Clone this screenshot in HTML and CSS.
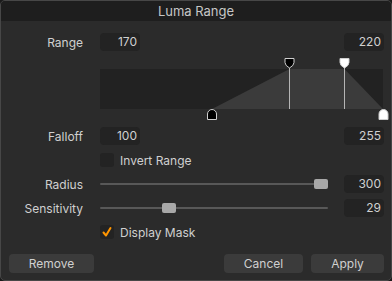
FILE: index.html
```html
<!DOCTYPE html>
<html lang="en">
<head>
    <meta charset="UTF-8">
    <title>Luma Range</title>
    <link rel="stylesheet" href="styles.css">
</head>
<body>

<div class="window">
    <div class="titlebar">Luma Range</div>

    <div class="content">
        <div class="row">
            <span class="label">Range</span>
            <span class="field">170</span>
            <span class="spacer"></span>
            <span class="field">220</span>
        </div>

        <div class="graph">
            <svg width="292" height="76" viewBox="0 0 292 76">
                <rect x="0" y="18" width="283" height="40" fill="#222222"/>
                <polygon points="112,58 189.5,18 244.5,18 283,58" fill="#3b3b3b"/>
                <line x1="189.5" y1="16" x2="189.5" y2="58" stroke="#b5b5b5" stroke-width="1"/>
                <line x1="244.5" y1="16" x2="244.5" y2="58" stroke="#b5b5b5" stroke-width="1"/>
                <!-- top handles -->
                <path d="M185,7.5 h9 v4 q0,3 -4.5,5.5 q-4.5,-2.5 -4.5,-5.5 z" fill="#000" stroke="#cfcfcf" stroke-width="1"/>
                <path d="M240,7.5 h9 v4 q0,3 -4.5,5.5 q-4.5,-2.5 -4.5,-5.5 z" fill="#fff" stroke="#cfcfcf" stroke-width="1"/>
                <!-- bottom handles -->
                <path d="M107.5,68.5 v-5.5 a4.5,4.5 0 0 1 9,0 v5.5 z" fill="#000" stroke="#cfcfcf" stroke-width="1"/>
                <path d="M279,68.5 v-5.5 a4.5,4.5 0 0 1 9,0 v5.5 z" fill="#fff" stroke="#cfcfcf" stroke-width="1"/>
            </svg>
        </div>

        <div class="rows">
            <div class="row">
                <span class="label">Falloff</span>
                <span class="field">100</span>
                <span class="spacer"></span>
                <span class="field">255</span>
            </div>
            <div class="row">
                <span class="label"></span>
                <span class="check"></span>
                <span class="check-text">Invert Range</span>
            </div>
            <div class="row">
                <span class="label">Radius</span>
                <div class="slider">
                    <div class="thumb" style="left: 214px"></div>
                </div>
                <span class="field">300</span>
            </div>
            <div class="row">
                <span class="label">Sensitivity</span>
                <div class="slider">
                    <div class="thumb" style="left: 62px"></div>
                </div>
                <span class="field">29</span>
            </div>
            <div class="row">
                <span class="label"></span>
                <span class="check">
                    <svg width="14" height="14" viewBox="0 0 14 14">
                        <polyline points="3.5,7.5 6,10.5 10.5,3" fill="none" stroke="#ff9500" stroke-width="2" stroke-linecap="round" stroke-linejoin="round"/>
                    </svg>
                </span>
                <span class="check-text">Display Mask</span>
            </div>
        </div>

        <div class="buttons">
            <button class="btn btn-remove">Remove</button>
            <span class="spacer"></span>
            <button class="btn btn-cancel">Cancel</button>
            <button class="btn btn-apply">Apply</button>
        </div>
    </div>
</div>

</body>
</html>
```

FILE: styles.css
```css
body {
    margin: 0;
    background: #1a1a1a;
    font-family: 'Inter', 'Noto Sans', sans-serif;
    font-size: 12px;
    color: #d0d0d0;
}

.window {
    width: 392px;
    height: 281px;
    box-sizing: border-box;
    background-color: #2b2b2b;
    border: 1px solid #474747;
    border-radius: 5px;
    overflow: hidden;
}

.titlebar {
    height: 20px;
    line-height: 20px;
    background-color: #1e1e1e;
    text-align: center;
    font-size: 13px;
    color: #c6c6c6;
}

.content {
    padding: 12px 7px 0 0;
}

.row {
    display: flex;
    align-items: center;
    height: 18px;
}

.rows {
    display: flex;
    flex-direction: column;
    gap: 6px;
}

.label {
    width: 82px;
    margin-right: 17px;
    text-align: right;
    flex-shrink: 0;
}

.spacer {
    flex: 1;
}

.field {
    width: 40px;
    height: 18px;
    box-sizing: border-box;
    padding-right: 3px;
    line-height: 18px;
    text-align: right;
    background-color: #232323;
    border-radius: 4px;
}

.graph {
    height: 76px;
    padding-left: 99px;
}

.graph svg {
    display: block;
    overflow: visible;
}

.check {
    width: 14px;
    height: 14px;
    background-color: #232323;
    border-radius: 3px;
}

.check svg {
    display: block;
}

.check-text {
    margin-left: 6px;
}

.slider {
    position: relative;
    width: 228px;
    height: 2px;
    margin-right: 16px;
    background-color: #585858;
    border-radius: 1px;
}

.thumb {
    position: absolute;
    top: -4px;
    width: 14px;
    height: 10px;
    background-color: #a8a8a8;
    border-radius: 2px;
}

.buttons {
    display: flex;
    align-items: center;
    margin-top: 13px;
    padding-left: 8px;
}

.btn {
    height: 19px;
    padding: 0;
    border: none;
    border-radius: 4px;
    background-color: #3b3b3b;
    color: #d0d0d0;
    font-family: inherit;
    font-size: 12px;
}

.btn-remove {
    width: 85px;
}

.btn-cancel {
    width: 79px;
    margin-right: 8px;
}

.btn-apply {
    width: 73px;
}
```
